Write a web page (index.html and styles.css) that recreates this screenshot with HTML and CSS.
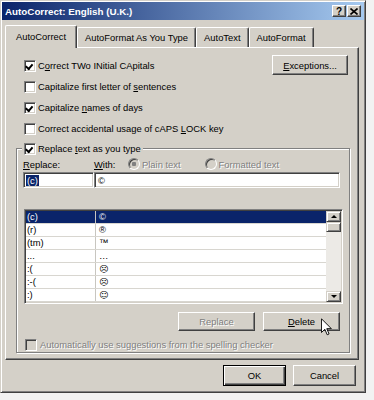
FILE: index.html
```html
<!DOCTYPE html>
<html>
<head>
    <title>AutoCorrect: English (U.K.)</title>
    <link rel="stylesheet" href="styles.css">
</head>
<body>
    <div class="dialog">
        <div class="titlebar">
            <span class="title">AutoCorrect: English (U.K.)</span>
            <span class="caption-btn">?</span>
            <span class="caption-btn">
                <svg width="8" height="7" viewBox="0 0 8 7"><path d="M0.5 0.5 L7.5 6.5 M7.5 0.5 L0.5 6.5" stroke="#000" stroke-width="1.6"/></svg>
            </span>
        </div>

        <div class="tabs">
            <div class="tab active">AutoCorrect</div>
            <div class="tab">AutoFormat As You Type</div>
            <div class="tab">AutoText</div>
            <div class="tab">AutoFormat</div>
        </div>

        <div class="panel">
            <div class="options">
                <div class="checks">
                    <label class="check"><span class="box checked"></span><span>C<u>o</u>rrect TWo INitial CApitals</span></label>
                    <label class="check"><span class="box"></span><span>Capitalize first letter of <u>s</u>entences</span></label>
                    <label class="check"><span class="box checked"></span><span>Capitalize <u>n</u>ames of days</span></label>
                    <label class="check"><span class="box"></span><span>Correct accidental usage of cAPS <u>L</u>OCK key</span></label>
                </div>
                <button class="btn exceptions"><span><u>E</u>xceptions...</span></button>
            </div>

            <fieldset class="group">
                <legend><label class="check"><span class="box checked"></span><span>Replace <u>t</u>ext as you type</span></label></legend>

                <div class="labels">
                    <span class="lbl-replace"><u>R</u>eplace:</span>
                    <span class="lbl-with"><u>W</u>ith:</span>
                    <span class="radio disabled"><span class="dot on"></span><span>Plain text</span></span>
                    <span class="radio disabled formatted"><span class="dot"></span><span>Formatted text</span></span>
                </div>

                <div class="fields">
                    <div class="field replace"><span class="sel">(c)</span></div>
                    <div class="field with">©</div>
                </div>

                <div class="list">
                    <div class="rows">
                        <div class="row selected"><span>(c)</span><span>©</span></div>
                        <div class="row"><span>(r)</span><span>®</span></div>
                        <div class="row"><span>(tm)</span><span>™</span></div>
                        <div class="row"><span>...</span><span>…</span></div>
                        <div class="row"><span>:(</span><span class="face">☹</span></div>
                        <div class="row"><span>:-(</span><span class="face">☹</span></div>
                        <div class="row"><span>:)</span><span class="face">☺</span></div>
                    </div>
                    <div class="scrollbar">
                        <div class="sb-btn"><span class="arrow-up"></span></div>
                        <div class="sb-thumb"></div>
                        <div class="sb-track"></div>
                        <div class="sb-btn"><span class="arrow-down"></span></div>
                    </div>
                </div>

                <div class="actions">
                    <button class="btn disabled">Replace</button>
                    <button class="btn"><span><u>D</u>elete</span></button>
                </div>

                <label class="check auto disabled"><span class="box"></span><span>Automatically use suggestions from the spelling checker</span></label>
            </fieldset>
        </div>

        <div class="footer">
            <button class="btn default">OK</button>
            <button class="btn">Cancel</button>
        </div>

        <svg class="cursor" width="11" height="18" viewBox="0 0 12 19">
            <path d="M0.5 0.5 V15.5 L4.2 12 L6.8 18 L8.8 17.1 L6.3 11.3 H11.3 Z" fill="#fff" stroke="#000" stroke-width="1"/>
        </svg>
    </div>
</body>
</html>
```

FILE: styles.css
```css
* {
    box-sizing: border-box;
}

body {
    margin: 0;
    background: #f2f2f2;
    color: #000;
    font-family: "Liberation Sans", Arial, sans-serif;
    font-size: 9.4px;
}

u {
    text-decoration: underline;
    text-underline-offset: 1px;
}

.dialog {
    position: relative;
    width: 366px;
    height: 393px;
    padding: 1px;
    background: #d4d0c8;
    border: 1px solid;
    border-color: #d4d0c8 #404040 #404040 #d4d0c8;
    box-shadow: inset 1px 1px #fff, inset -1px -1px #808080;
}

.titlebar {
    display: flex;
    align-items: center;
    height: 18px;
    padding: 0 3px 0 3px;
    background: linear-gradient(to right, #0a246a, #a6caf0);
    color: #fff;
    font-weight: bold;
    font-size: 9.8px;
}

.title {
    flex: 1;
}

.caption-btn {
    display: flex;
    align-items: center;
    justify-content: center;
    width: 14px;
    height: 12px;
    margin-left: 1px;
    background: #d4d0c8;
    color: #000;
    font-size: 10px;
    border: 1px solid;
    border-color: #fff #404040 #404040 #fff;
    box-shadow: inset -1px -1px #808080;
}

/* tabs */
.tabs {
    display: flex;
    align-items: flex-end;
    height: 22px;
    margin-top: 5px;
    padding-left: 3px;
}

.tab {
    display: flex;
    align-items: center;
    height: 20px;
    padding: 0 7px;
    border: 1px solid;
    border-bottom: none;
    border-color: #fff #404040 #404040 #fff;
    border-radius: 2px 2px 0 0;
    box-shadow: inset -1px 0 #808080;
    white-space: nowrap;
}

.tab.active {
    position: relative;
    z-index: 1;
    height: 23px;
    margin-bottom: -1px;
    padding: 0 10px 1px;
    background: #d4d0c8;
}

.panel {
    width: 354px;
    height: 313px;
    margin-left: 3px;
    border: 1px solid;
    border-color: #fff #404040 #404040 #fff;
    box-shadow: inset -1px -1px #808080;
}

/* checkboxes */
.options {
    display: flex;
    justify-content: space-between;
    align-items: flex-start;
}

.checks {
    display: flex;
    flex-direction: column;
    gap: 8px;
    padding: 11px 0 0 18px;
}

.check {
    display: flex;
    align-items: center;
    gap: 2px;
    height: 13px;
    white-space: nowrap;
}

.box {
    position: relative;
    width: 12px;
    height: 12px;
    background: #fff;
    border: 1px solid;
    border-color: #808080 #fff #fff #808080;
    box-shadow: inset 1px 1px #404040, inset -1px -1px #d4d0c8;
}

.box.checked::after {
    content: "";
    position: absolute;
    left: 2px;
    top: 2px;
    width: 3px;
    height: 5px;
    border: solid #000;
    border-width: 0 2px 2px 0;
    transform: rotate(40deg);
    transform-origin: 60% 40%;
}

.disabled {
    color: #808080;
    text-shadow: 1px 1px #fff;
}

.check.disabled .box {
    background: #d4d0c8;
}

/* buttons */
.btn {
    display: flex;
    align-items: center;
    justify-content: center;
    padding: 0;
    font: inherit;
    color: #000;
    background: #d4d0c8;
    border: 1px solid;
    border-color: #fff #404040 #404040 #fff;
    box-shadow: inset -1px -1px #808080;
}

.btn.disabled {
    color: #808080;
}

.btn.default {
    border-color: #000;
    box-shadow: inset 1px 1px #fff, inset -1px -1px #404040, inset -2px -2px #808080;
}

.exceptions {
    width: 76px;
    height: 20px;
    margin: 7px 10px 0 0;
}

/* replace group */
.group {
    min-width: 0;
    margin: 7px 8px 0 10px;
    padding: 0 7px 1px 7px;
    border: 1px solid #808080;
    box-shadow: inset 1px 1px #fff, 1px 1px #fff;
}

.group legend {
    margin-left: -2px;
    padding: 0 2px;
    background: #d4d0c8;
}

.labels {
    display: flex;
    align-items: center;
    height: 12px;
    margin: 3px 0 0 -1px;
    white-space: nowrap;
}

.lbl-replace {
    width: 71px;
}

.lbl-with {
    width: 34px;
}

.radio {
    display: flex;
    align-items: center;
    gap: 2px;
}

.radio.formatted {
    margin-left: 24px;
}

.dot {
    width: 12px;
    height: 12px;
    border-radius: 50%;
    background: #d4d0c8;
    border: 1px solid;
    border-color: #808080 #fff #fff #808080;
    box-shadow: inset 1px 1px #404040;
}

.dot.on {
    background: radial-gradient(circle, #808080 0 2px, #d4d0c8 2.5px);
}

.fields {
    display: flex;
    margin: 2px 0 0 -1px;
}

.field {
    display: flex;
    align-items: center;
    height: 16px;
    padding-left: 2px;
    background: #fff;
    border: 1px solid;
    border-color: #808080 #fff #fff #808080;
    box-shadow: inset 1px 1px #404040, inset -1px -1px #d4d0c8;
}

.field.replace {
    width: 71px;
}

.field.with {
    width: 246px;
    padding-left: 3px;
}

.sel {
    padding: 0 1px;
    background: #0a246a;
    color: #fff;
}

/* list */
.list {
    display: flex;
    width: 319px;
    height: 95px;
    margin-top: 21px;
    padding: 1px;
    background: #fff;
    border: 1px solid;
    border-color: #808080 #fff #fff #808080;
    box-shadow: inset 1px 1px #404040, inset -1px -1px #d4d0c8;
}

.rows {
    flex: 1;
    overflow: hidden;
}

.row {
    display: grid;
    grid-template-columns: 70px 1fr;
    height: 13px;
    line-height: 12px;
    border-bottom: 1px solid #d8d6d0;
}

.row span:first-child {
    padding-left: 1px;
    border-right: 1px solid #c8c6c0;
}

.row span:last-child {
    padding-left: 3px;
}

.row.selected {
    background: #0a246a;
    color: #fff;
}

.face {
    font-family: "DejaVu Sans", sans-serif;
    font-size: 9px;
}

.scrollbar {
    display: flex;
    flex-direction: column;
    width: 15px;
    background: #eceae6;
}

.sb-btn,
.sb-thumb {
    display: flex;
    align-items: center;
    justify-content: center;
    height: 11px;
    background: #d4d0c8;
    border: 1px solid;
    border-color: #d4d0c8 #404040 #404040 #d4d0c8;
    box-shadow: inset 1px 1px #fff, inset -1px -1px #808080;
}

.sb-thumb {
    height: 10px;
}

.sb-track {
    flex: 1;
}

.arrow-up,
.arrow-down {
    border-left: 3px solid transparent;
    border-right: 3px solid transparent;
}

.arrow-up {
    border-bottom: 3px solid #000;
}

.arrow-down {
    border-top: 3px solid #000;
}

.actions {
    display: flex;
    justify-content: flex-end;
    gap: 8px;
    margin: 8px 2px 0 0;
}

.actions .btn {
    width: 77px;
    height: 19px;
}

.check.auto {
    gap: 3px;
    margin: 7px 0 0 1px;
}

/* footer */
.footer {
    display: flex;
    justify-content: flex-end;
    gap: 7px;
    margin-top: 5px;
    padding-right: 8px;
}

.footer .btn {
    width: 63px;
    height: 21px;
}

.cursor {
    position: absolute;
    left: 320px;
    top: 317px;
}
```
